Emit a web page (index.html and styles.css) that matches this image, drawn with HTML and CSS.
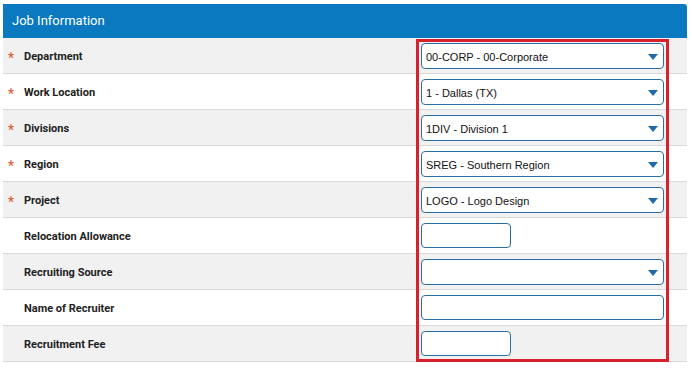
FILE: index.html
```html
<!DOCTYPE html>
<html lang="en">
  <head>
    <meta charset="UTF-8" />
    <title>Job Information</title>
    <link rel="stylesheet" href="styles.css">
  </head>
  <body>
    <section class="panel">
      <h2 class="panel-title">Job Information</h2>

      <div class="row grey">
        <label class="label"><span class="req">*</span>Department</label>
        <div class="select">00-CORP - 00-Corporate<span class="arrow"></span></div>
      </div>
      <div class="row">
        <label class="label"><span class="req">*</span>Work Location</label>
        <div class="select">1 - Dallas (TX)<span class="arrow"></span></div>
      </div>
      <div class="row grey">
        <label class="label"><span class="req">*</span>Divisions</label>
        <div class="select">1DIV - Division 1<span class="arrow"></span></div>
      </div>
      <div class="row">
        <label class="label"><span class="req">*</span>Region</label>
        <div class="select">SREG - Southern Region<span class="arrow"></span></div>
      </div>
      <div class="row grey">
        <label class="label"><span class="req">*</span>Project</label>
        <div class="select">LOGO - Logo Design<span class="arrow"></span></div>
      </div>
      <div class="row">
        <label class="label"><span class="req"></span>Relocation Allowance</label>
        <div><input class="input short" type="text" /></div>
      </div>
      <div class="row grey">
        <label class="label"><span class="req"></span>Recruiting Source</label>
        <div class="select"><span class="arrow"></span></div>
      </div>
      <div class="row">
        <label class="label"><span class="req"></span>Name of Recruiter</label>
        <div><input class="input" type="text" /></div>
      </div>
      <div class="row grey">
        <label class="label"><span class="req"></span>Recruitment Fee</label>
        <div><input class="input short" type="text" /></div>
      </div>

      <div class="highlight"></div>
    </section>
  </body>
</html>
```

FILE: styles.css
```css
body {
  margin: 0;
  padding: 4px 5px 0 3px;
  background: white;
  font-family: Roboto, "Liberation Sans", sans-serif;
}

.panel {
  position: relative;
  width: 684px;
}

.panel-title {
  margin: 0;
  height: 34px;
  line-height: 33px;
  padding-left: 9px;
  background-color: #0a79c0;
  color: white;
  font-size: 13px;
  font-weight: normal;
  border-top-right-radius: 3px;
}

.row {
  display: grid;
  grid-template-columns: 418px 243px;
  align-items: center;
  height: 35px;
  border-bottom: 1px solid #d9d9d9;
}

.grey {
  background-color: #f1f1f1;
}

.label {
  display: flex;
  align-items: center;
  padding-top: 2px;
  font-size: 11px;
  font-weight: bold;
  color: #222;
}

.req {
  width: 21px;
  padding-left: 5px;
  box-sizing: border-box;
  color: #e0522a;
  font-size: 14px;
  font-weight: normal;
  line-height: 11px;
  padding-top: 3px;
}

.select {
  position: relative;
  box-sizing: border-box;
  height: 26px;
  line-height: 26px;
  padding-left: 4px;
  border: 1px solid #2b6ea6;
  border-radius: 4px;
  background: white;
  font-family: "Liberation Sans", Arial, sans-serif;
  font-size: 11px;
  color: #111;
}

.arrow {
  position: absolute;
  right: 5px;
  top: 10px;
  border-left: 5px solid transparent;
  border-right: 5px solid transparent;
  border-top: 6px solid #1f6aad;
}

.input {
  display: block;
  box-sizing: border-box;
  width: 243px;
  height: 25px;
  margin: 0;
  border: 1px solid #2b6ea6;
  border-radius: 4px;
  background: white;
}

.input.short {
  width: 90px;
}

.highlight {
  position: absolute;
  left: 413px;
  top: 35px;
  width: 253px;
  height: 323px;
  box-sizing: border-box;
  border: 3px solid #d7222d;
  pointer-events: none;
}
```
